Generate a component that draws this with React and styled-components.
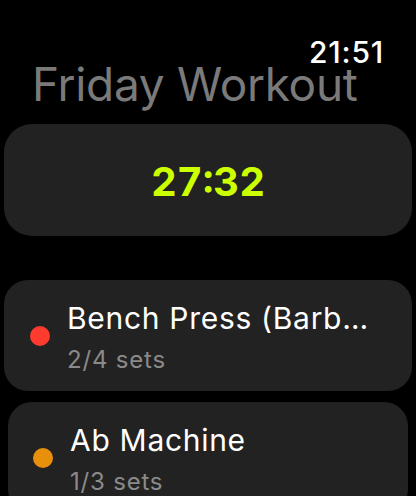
import React from "react";
import styled, { createGlobalStyle } from "styled-components";

const GlobalStyle = createGlobalStyle`
  html, body {
    margin: 0;
    padding: 0;
    background: #000;
  }
  body {
    font-family: Inter, "Noto Sans", sans-serif;
    -webkit-font-smoothing: antialiased;
  }
`;

const Screen = styled.div`
  width: 416px;
  height: 496px;
  overflow: hidden;
  background: #000;
  display: flex;
  flex-direction: column;
  padding: 37px 4px 0;
  box-sizing: border-box;
`;

const Clock = styled.div`
  align-self: flex-end;
  margin-right: 28px;
  font-size: 30px;
  line-height: 1;
  font-weight: 500;
  color: #fff;
  letter-spacing: 0.8px;
  flex-shrink: 0;
`;

const Title = styled.h1`
  margin: -6px 0 0 28px;
  font-size: 46px;
  line-height: 1;
  font-weight: 400;
  color: #7a7a7a;
  letter-spacing: -0.3px;
  flex-shrink: 0;
`;

const TimerCard = styled.div`
  margin-top: 17px;
  height: 112px;
  flex-shrink: 0;
  border-radius: 28px;
  background: #222;
  display: flex;
  align-items: center;
  justify-content: center;
`;

const Timer = styled.span`
  font-size: 40px;
  font-weight: 700;
  color: #ccff00;
  font-variant-numeric: tabular-nums;
  padding-top: 2px;
`;

const List = styled.div`
  margin-top: 44px;
  display: flex;
  flex-direction: column;
  gap: 11px;
  flex-shrink: 0;
`;

// the lower card sits a bit narrower, like the watch list scaling off-screen
const ExerciseCard = styled.div`
  margin: 0 ${(p) => p.$inset}px;
  height: 111px;
  flex-shrink: 0;
  border-radius: 24px;
  background: #222;
  display: flex;
  align-items: center;
  padding: 0 36px 0 ${(p) => (p.$inset ? 25 : 26)}px;
  box-sizing: border-box;
  gap: 17px;
`;

const Dot = styled.span`
  width: 20px;
  height: 20px;
  border-radius: 50%;
  flex-shrink: 0;
  background: ${(p) => p.$color};
`;

const Info = styled.div`
  min-width: 0;
  flex: 1;
  display: flex;
  flex-direction: column;
  gap: 15px;
  padding-top: 3px;
`;

const Name = styled.div`
  font-size: 30px;
  line-height: 1.1;
  margin: -1px 0 -2px;
  color: #fff;
  letter-spacing: 0.7px;
  white-space: nowrap;
  overflow: hidden;
  text-overflow: ellipsis;
`;

const Sets = styled.div`
  font-size: 24px;
  line-height: 1;
  color: #8a8a8a;
  letter-spacing: 0.8px;
`;

const exercises = [
  { name: "Bench Press (Barbell)", sets: "2/4 sets", color: "#ff3b30", inset: 0 },
  { name: "Ab Machine", sets: "1/3 sets", color: "#e8900c", inset: 4 },
];

const App = () => (
  <>
    <GlobalStyle />
    <Screen>
      <Clock>21:51</Clock>
      <Title>Friday Workout</Title>
      <TimerCard>
        <Timer>27:32</Timer>
      </TimerCard>
      <List>
        {exercises.map((ex) => (
          <ExerciseCard key={ex.name} $inset={ex.inset}>
            <Dot $color={ex.color} />
            <Info>
              <Name>{ex.name}</Name>
              <Sets>{ex.sets}</Sets>
            </Info>
          </ExerciseCard>
        ))}
      </List>
    </Screen>
  </>
);

export default App;
